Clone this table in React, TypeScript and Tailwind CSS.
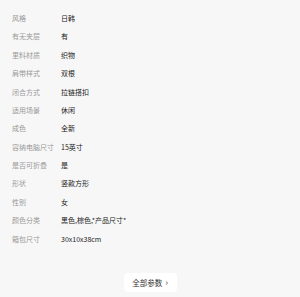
import React from "react";

const rows: [string, string][] = [
  ["风格", "日韩"],
  ["有无夹层", "有"],
  ["里料材质", "织物"],
  ["肩带样式", "双根"],
  ["闭合方式", "拉链搭扣"],
  ["适用场景", "休闲"],
  ["成色", "全新"],
  ["容纳电脑尺寸", "15英寸"],
  ["是否可折叠", "是"],
  ["形状", "竖款方形"],
  ["性别", "女"],
  ["颜色分类", "黑色,棕色,*产品尺寸*"],
  ["箱包尺寸", "30x10x38cm"],
];

export default function App() {
  return (
    <div
      className="w-[300px] h-[297px] bg-[#f7f7f7] flex flex-col"
      style={{ fontFamily: '"Noto Sans CJK SC", "Noto Sans", sans-serif' }}
    >
      <div className="pt-[9px] pl-[12px] flex flex-col">
        {rows.map(([k, v]) => (
          <div key={k} className="flex h-[18.4px] items-center text-[7px]">
            <div className="w-[49px] text-[#999999]">{k}</div>
            <div className="text-[#222222]">{v}</div>
          </div>
        ))}
      </div>
      <div className="flex justify-center mt-[25px]">
        <div className="w-[53px] h-[19px] bg-white rounded-[4px] flex items-center justify-center text-[7.5px] text-[#333333]">
          全部参数
          <span className="ml-[3px] text-[9px] leading-none text-[#555]">›</span>
        </div>
      </div>
    </div>
  );
}
